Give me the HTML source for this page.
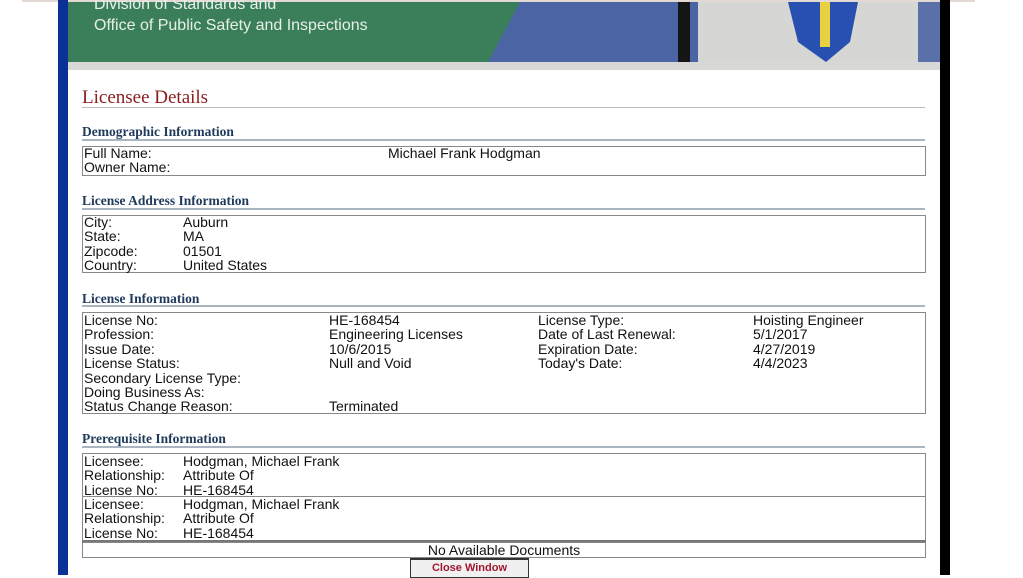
<!DOCTYPE html>
<html><head><style>
*{margin:0;padding:0;box-sizing:border-box}
body{width:1023px;height:575px;overflow:hidden;background:#fff;position:relative;font-family:"Liberation Sans",Arial,sans-serif;font-size:14px;color:#111}
.a{position:absolute}
.h{font-family:"Liberation Serif",serif;font-weight:bold;font-size:13.5px;color:#1f3a5a}
.ln{height:2px;background:#a9b6c2}
.box{border:1px solid #888;}
.t{position:absolute;line-height:14.4px;white-space:nowrap}
</style></head><body>
<div class="a" style="left:22px;top:0;width:953px;height:2px;background:#e2d8d4"></div>
<div class="a" style="left:58px;top:0;width:10px;height:575px;background:#0b3096"></div>
<div class="a" style="left:940px;top:0;width:10px;height:575px;background:#000"></div>
<svg class="a" style="left:68px;top:2px" width="872" height="60">
<rect width="872" height="60" fill="#4a64a4"/>
<polygon points="0,0 452,0 420,60 0,60" fill="#3a7f5a"/>
<rect x="610" width="12" height="60" fill="#151515"/>
<rect x="630" width="242" height="60" fill="#d6d6d4"/>
<rect x="850" y="0" width="22" height="60" fill="#5a70a8"/>
<path d="M720 0 L790 0 L782 40 L758 60 L730 40Z" fill="#2850b0"/>
<rect x="752" y="0" width="10" height="45" fill="#e8d040"/>
</svg>
<div class="t" style="left:94px;top:-4px;font-size:16px;color:#e8efe8;line-height:18px">Division of Standards and</div>
<div class="t" style="left:94px;top:17px;font-size:16px;color:#e8efe8;line-height:18px">Office of Public Safety and Inspections</div>
<div class="a" style="left:68px;top:62px;width:872px;height:8px;background:#d8d8d6"></div>
<div class="t" style="left:82px;top:87px;font-family:'Liberation Serif',serif;font-size:19px;color:#8a1d1d;line-height:22px">Licensee Details</div>
<div class="a" style="left:82px;top:107px;width:843px;height:1px;background:#bbb"></div>

<div class="t h" style="left:82px;top:125px">Demographic Information</div>
<div class="a ln" style="left:82px;top:139px;width:843px"></div>
<div class="a box" style="left:82px;top:146px;width:844px;height:30px"></div>
<div class="t" style="left:84px;top:146px">Full Name:<br>Owner Name:</div>
<div class="t" style="left:388px;top:146px">Michael Frank Hodgman</div>

<div class="t h" style="left:82px;top:194px">License Address Information</div>
<div class="a ln" style="left:82px;top:208px;width:843px"></div>
<div class="a box" style="left:82px;top:215px;width:844px;height:58px"></div>
<div class="t" style="left:84px;top:215px">City:<br>State:<br>Zipcode:<br>Country:</div>
<div class="t" style="left:183px;top:215px">Auburn<br>MA<br>01501<br>United States</div>

<div class="t h" style="left:82px;top:292px">License Information</div>
<div class="a ln" style="left:82px;top:305px;width:843px"></div>
<div class="a box" style="left:82px;top:312px;width:844px;height:102px"></div>
<div class="t" style="left:84px;top:313px">License No:<br>Profession:<br>Issue Date:<br>License Status:<br>Secondary License Type:<br>Doing Business As:<br>Status Change Reason:</div>
<div class="t" style="left:329px;top:313px">HE-168454<br>Engineering Licenses<br>10/6/2015<br>Null and Void<br><br><br>Terminated</div>
<div class="t" style="left:538px;top:313px">License Type:<br>Date of Last Renewal:<br>Expiration Date:<br>Today's Date:</div>
<div class="t" style="left:753px;top:313px">Hoisting Engineer<br>5/1/2017<br>4/27/2019<br>4/4/2023</div>

<div class="t h" style="left:82px;top:432px">Prerequisite Information</div>
<div class="a ln" style="left:82px;top:446px;width:843px"></div>
<div class="a box" style="left:82px;top:453px;width:844px;height:89px"></div>
<div class="a" style="left:82px;top:496px;width:844px;height:1px;background:#888"></div>
<div class="a" style="left:82px;top:540px;width:844px;height:2px;background:#777"></div>
<div class="t" style="left:84px;top:454px">Licensee:<br>Relationship:<br>License No:</div>
<div class="t" style="left:183px;top:454px">Hodgman, Michael Frank<br>Attribute Of<br>HE-168454</div>
<div class="t" style="left:84px;top:497px">Licensee:<br>Relationship:<br>License No:</div>
<div class="t" style="left:183px;top:497px">Hodgman, Michael Frank<br>Attribute Of<br>HE-168454</div>
<div class="a box" style="left:82px;top:542px;width:844px;height:16px"></div>
<div class="t" style="left:82px;top:543px;width:844px;text-align:center">No Available Documents</div>
<div class="a" style="left:410px;top:558px;width:119px;height:20px;border:1px solid #333;border-top-width:2px;background:#f0f0f0;color:#a01830;font-size:11px;font-weight:bold;text-align:center;line-height:16px">Close Window</div>
</body></html>
